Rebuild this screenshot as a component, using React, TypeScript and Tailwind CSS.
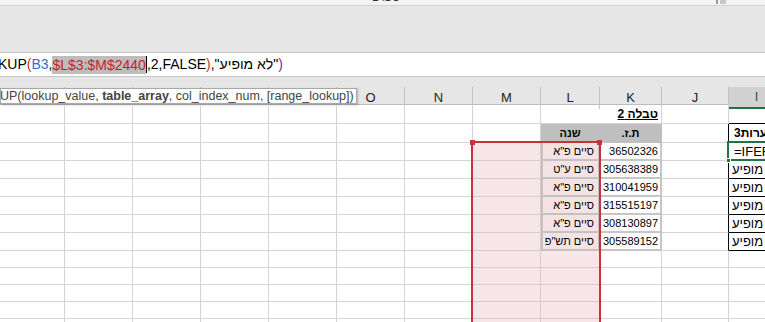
import React from "react";

const GRID =
  "grid grid-cols-[65px_68px_68px_68px_68px_68px_68px_68px_59px_62px_67px_56px]";

const LETTERS = ["T", "S", "R", "Q", "P", "O", "N", "M", "L", "K", "J", "I"];

const HEIGHTS = ["h-[19px]", "h-[19px]", "h-[18px]", "h-[18px]", "h-[18px]", "h-[18px]", "h-[18px]", "h-[18px]", "h-[17px]", "h-[17px]", "h-[17px]", "h-[17px]", "h-[17px]"];

const IDS = ["36502326", "305638389", "310041959", "315515197", "308130897", "305589152"];
const YEARS = ['סיים פ"א', 'סיים ע"ט', 'סיים פ"א', 'סיים פ"א', 'סיים פ"א', 'סיים תש"פ'];

const cellFont = "font-['Liberation_Sans',Arial,sans-serif] text-[11px] text-black";

function Cell({ row, col, h }: { row: number; col: number; h: string }) {
  const base = `${h} border-b border-r overflow-hidden flex items-center ${cellFont}`;
  const dataRow = row >= 2 && row <= 7 ? row - 2 : -1;
  const inSel = row >= 2;

  // selected range M:L (pink)
  if (col === 7 && inSel) {
    return <div className={`${base} bg-[#f7e6e7] border-[#dcc8c9]`} />;
  }
  if (col === 8) {
    if (row === 0) return <div className={`${base} border-r-0 border-[#d4d4d4]`} />;
    if (row === 1)
      return (
        <div className={`${base} bg-[#bfbfbf] border-[#bfbfbf] justify-center font-bold`} dir="rtl">
          שנה
        </div>
      );
    if (dataRow >= 0)
      return (
        <div
          className={`${base} bg-[#f3e3e4] border-l-2 border-r-2 border-b-2 border-[#c6c1c1] justify-start pr-[4px]`}
          dir="rtl"
        >
          {YEARS[dataRow]}
        </div>
      );
    return <div className={`${base} bg-[#f7e6e7] border-[#dcc8c9]`} />;
  }
  if (col === 9) {
    if (row === 0)
      return (
        <div className={`${base} border-[#d4d4d4] justify-end pr-[3px] font-bold text-[12px]`}>
          <span dir="rtl" className="underline whitespace-nowrap">טבלה 2</span>
        </div>
      );
    if (row === 1)
      return (
        <div className={`${base} bg-[#bfbfbf] border-[#bfbfbf] justify-center font-bold`} dir="rtl">
          ת.ז.
        </div>
      );
    if (dataRow >= 0)
      return (
        <div className={`${base} border-r-2 border-b-2 border-[#c6c6c6] justify-end pr-[2px]`}>
          {IDS[dataRow]}
        </div>
      );
  }
  if (col === 10 && row >= 1 && row <= 7) {
    return <div className={`${base} border-b-[#d4d4d4] border-r-black`} />;
  }
  if (col === 11) {
    if (row === 0) return <div className={`${base} border-r-0 border-b-black`} />;
    if (row === 1)
      return (
        <div className={`${base} border-r-0 border-b-black font-bold text-[12px] pl-[5px]`}>
          <span dir="rtl" className="whitespace-nowrap">הערות3</span>
        </div>
      );
    if (row === 2)
      return (
        <div className={`${base} border-r-0 border-b-black pl-[5px] text-[13px]`}>
          <span className="whitespace-nowrap">=IFERROR(</span>
        </div>
      );
    if (row >= 3 && row <= 7)
      return (
        <div className={`${base} border-r-0 border-b-black pl-[3px] text-[13px]`}>
          <span dir="rtl" className="whitespace-nowrap">לא מופיע</span>
        </div>
      );
    return <div className={`${base} border-r-0 border-[#d4d4d4]`} />;
  }
  return <div className={`${base} border-[#d4d4d4]`} />;
}

export default function App() {
  return (
    <div className="w-[765px] h-[322px] overflow-hidden bg-white relative select-none">
      {/* title strip */}
      <div className="h-[6px] bg-[#f3f3f3] border-b border-[#d2d2d2] overflow-hidden flex">
        <span className="ml-[372px] mt-[-9px] text-[12px] font-['Liberation_Sans',Arial,sans-serif] text-[#333] leading-[12px]" dir="rtl">
          ספר1
        </span>
        <svg className="ml-[316px] mt-[-4px]" width="10" height="8" viewBox="0 0 10 8">
          <rect x="0" y="0" width="2" height="8" fill="#9a9a9a" />
          <rect x="4" y="0" width="6" height="8" fill="#c8c8c8" />
        </svg>
      </div>

      {/* ribbon area */}
      <div className="h-[46px] bg-[#e6e6e6]" />

      {/* formula bar */}
      <div className="h-[25px] bg-white border-y border-[#c6c6c6] flex items-center overflow-hidden font-['Liberation_Sans',Arial,sans-serif] text-[14px] text-black whitespace-nowrap">
        <span className="ml-[-2px]">KUP</span>
        <span className="text-[#c0392b]">(</span>
        <span className="text-[#2f6fd0]">B3</span>
        <span>,</span>
        <span className="bg-[#bdbdbd] text-[#c8202c] leading-[18px]">$L$3:$M$2440</span>
        <span className="w-px h-[17px] bg-black" />
        <span>,2,FALSE</span>
        <span className="text-[#c0392b]">)</span>
        <span>,"לא מופיע"</span>
        <span className="text-[#7030a0]">)</span>
      </div>

      {/* gap */}
      <div className="h-[10px] bg-[#e6e6e6]" />

      {/* column headers (T..P lie under the tooltip) */}
      <div className={`${GRID} relative h-[18px] bg-[#e6e6e6] border-b border-[#bdbdbd]`}>
        {LETTERS.map((l, i) => (
          <div
            key={l}
            className={`flex items-center justify-center border-r border-[#c3c3c3] text-[13px] font-['Liberation_Sans',Arial,sans-serif] ${
              i === 11 ? "bg-[#d2d2d2] border-b-2 border-b-[#217346] text-[#1e5c3a]" : "text-[#222]"
            }`}
          >
            {i >= 5 ? l : null}
          </div>
        ))}
        {/* function tooltip */}
        <div className="absolute left-0 top-[1px] w-[357px] h-[16px] bg-white border border-[#a8a8a8] shadow-[1px_1px_2px_rgba(0,0,0,0.25)] flex items-center overflow-hidden whitespace-nowrap font-['Liberation_Sans',Arial,sans-serif] text-[12.5px] text-[#444]">
          <span className="ml-[-1px]">UP(lookup_value, </span>
          <span className="font-bold">&nbsp;table_array</span>
          <span>, col_index_num, [range_lookup])</span>
        </div>
      </div>

      {/* grid */}
      <div className="relative">
        {HEIGHTS.map((h, r) => (
          <div key={r} className={GRID}>
            {LETTERS.map((_, c) => (
              <Cell key={c} row={r} col={c} h={h} />
            ))}
          </div>
        ))}

        {/* range selection frame L3:M2440 */}
        <div className="absolute left-[471px] top-[36px] w-[130px] h-[200px] border-2 border-b-0 border-[#c9323a] pointer-events-none" />
        <div className="absolute left-[470px] top-[35px] w-[5px] h-[5px] bg-[#c9323a]" />
        <div className="absolute left-[597px] top-[35px] w-[5px] h-[5px] bg-[#c9323a]" />

        {/* active cell I3 */}
        <div className="absolute left-[727px] top-[36px] w-[60px] h-[20px] border-2 border-[#217346] pointer-events-none" />
        <div className="absolute left-[726px] top-[53px] w-[5px] h-[5px] bg-[#217346] border border-white" />
      </div>
    </div>
  );
}
